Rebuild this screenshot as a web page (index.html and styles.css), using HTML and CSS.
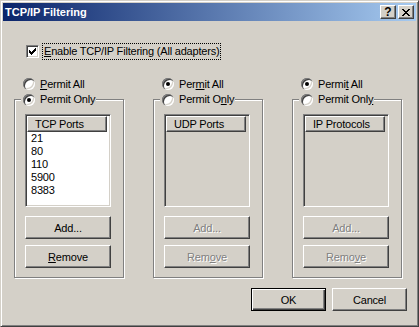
FILE: index.html
```html
<!DOCTYPE html>
<html lang="en">

<head>
  <meta charset="UTF-8" />
  <title>TCP/IP Filtering</title>
  <link rel="stylesheet" href="styles.css">
</head>

<body>

  <div class="window">

    <!-- Caption -->
    <div class="titlebar">
      <span class="title">TCP/IP Filtering</span>
      <div class="caption-buttons">
        <span class="cap-btn help">?</span>
        <span class="cap-btn">
          <svg width="8" height="7" viewBox="0 0 8 7">
            <path d="M0 0h2v1h1v1h2V1h1V0h2v1H7v1H6v1H5v1h1v1h1v1h1v1H6V6H5V5H3v1H2v1H0V6h1V5h1V4h1V3H2V2H1V1H0z" fill="#000" />
          </svg>
        </span>
      </div>
    </div>

    <div class="content">

      <label class="check-row">
        <span class="checkbox">
          <svg width="9" height="9" viewBox="0 0 9 9">
            <path d="M1 3h1v1h1v1h1V4h1V3h1V2h1V1h1v3H7v1H6v1H5v1H4v1H3V7H2V6H1z" fill="#000" />
          </svg>
        </span>
        <span class="focus"><u>E</u>nable TCP/IP Filtering (All adapters)</span>
      </label>

      <div class="columns">

        <!-- TCP -->
        <div class="column">
          <label class="radio-row"><span class="radio"></span><span><u>P</u>ermit All</span></label>
          <fieldset class="group">
            <legend><label class="radio-row"><span class="radio checked"></span><span>Permit Only</span></label></legend>
            <div class="listbox">
              <div class="list-header">TCP Ports</div>
              <ul class="list-items">
                <li>21</li>
                <li>80</li>
                <li>110</li>
                <li>5900</li>
                <li>8383</li>
              </ul>
            </div>
            <button class="btn">Add...</button>
            <button class="btn"><u>R</u>emove</button>
          </fieldset>
        </div>

        <!-- UDP -->
        <div class="column">
          <label class="radio-row"><span class="radio checked"></span><span>Per<u>m</u>it All</span></label>
          <fieldset class="group">
            <legend><label class="radio-row"><span class="radio"></span><span>Permit O<u>n</u>ly</span></label></legend>
            <div class="listbox disabled">
              <div class="list-header">UDP Ports</div>
              <ul class="list-items"></ul>
            </div>
            <button class="btn disabled">Add...</button>
            <button class="btn disabled">Rem<u>o</u>ve</button>
          </fieldset>
        </div>

        <!-- IP -->
        <div class="column">
          <label class="radio-row"><span class="radio checked"></span><span>Permi<u>t</u> All</span></label>
          <fieldset class="group">
            <legend><label class="radio-row"><span class="radio"></span><span>Permit Onl<u>y</u></span></label></legend>
            <div class="listbox disabled">
              <div class="list-header">IP Protocols</div>
              <ul class="list-items"></ul>
            </div>
            <button class="btn disabled">Add...</button>
            <button class="btn disabled">Remo<u>v</u>e</button>
          </fieldset>
        </div>

      </div>

      <div class="dialog-buttons">
        <button class="btn wide default">OK</button>
        <button class="btn wide">Cancel</button>
      </div>

    </div>
  </div>

</body>

</html>
```

FILE: styles.css
```css
body {
  margin: 0;
  padding: 0;
  font-family: 'Liberation Sans', Arial, sans-serif;
  font-size: 11px;
  color: #000;
  background: #d4d0c8;
}

u {
  text-decoration: underline;
  text-underline-offset: 1px;
}

/* Window frame */
.window {
  box-sizing: border-box;
  width: 419px;
  height: 327px;
  padding: 1px;
  background: #d4d0c8;
  border: 1px solid;
  border-color: #d4d0c8 #404040 #404040 #d4d0c8;
  box-shadow: inset 1px 1px 0 #fff, inset -1px -1px 0 #808080;
  display: flex;
  flex-direction: column;
}

.titlebar {
  height: 18px;
  margin: 1px 1px 0 1px;
  background: linear-gradient(to right, #0a246a, #a6caf0);
  display: flex;
  align-items: center;
  justify-content: space-between;
  padding: 0 2px;
}

.title {
  color: #fff;
  font-weight: bold;
  line-height: 18px;
}

.caption-buttons {
  display: flex;
  gap: 2px;
}

.cap-btn {
  box-sizing: border-box;
  width: 16px;
  height: 14px;
  background: #d4d0c8;
  border: 1px solid;
  border-color: #fff #404040 #404040 #fff;
  box-shadow: inset -1px -1px 0 #808080;
  display: flex;
  align-items: center;
  justify-content: center;
}

.cap-btn.help {
  font-weight: bold;
  font-size: 12px;
  line-height: 12px;
}

.content {
  flex: 1;
  padding: 22px 0 0 24px;
  display: flex;
  flex-direction: column;
  letter-spacing: -0.2px;
}

/* Checkbox */
.check-row {
  display: flex;
  align-items: center;
  height: 17px;
}

.checkbox {
  box-sizing: border-box;
  width: 13px;
  height: 13px;
  background: #fff;
  border: 1px solid;
  border-color: #808080 #fff #fff #808080;
  box-shadow: inset 1px 1px 0 #404040, inset -1px -1px 0 #d4d0c8;
  display: flex;
  align-items: center;
  justify-content: center;
}

.focus {
  margin-left: 3px;
  padding: 1px 1px 2px 1px;
  border: 1px dotted #000;
  line-height: 12px;
}

/* Columns */
.columns {
  display: flex;
  gap: 29px;
  margin: 17px 0 0 -12px;
}

.column {
  width: 110px;
  display: flex;
  flex-direction: column;
}

.radio-row {
  display: flex;
  align-items: center;
  gap: 5px;
  height: 14px;
  line-height: 13px;
  padding-left: 9px;
}

.radio {
  position: relative;
  box-sizing: border-box;
  width: 12px;
  height: 12px;
  border-radius: 50%;
  background: #fff;
  box-shadow: inset 1px 1px 0 #808080, inset 2px 2px 0 #404040, inset -1px -1px 0 #fff, inset -2px -2px 0 #d4d0c8;
  flex-shrink: 0;
}

.radio.checked::after {
  content: '';
  position: absolute;
  left: 4px;
  top: 4px;
  width: 4px;
  height: 4px;
  border-radius: 50%;
  background: #000;
}

/* Group box */
.group {
  box-sizing: border-box;
  width: 110px;
  min-width: 0;
  margin: 2px 0 0 0;
  padding: 8px 0 9px 10px;
  border: 1px solid #808080;
  box-shadow: 1px 1px 0 #fff, inset 1px 1px 0 #fff;
}

.group legend {
  margin-left: -4px;
  padding: 0 1px;
  background: #d4d0c8;
}

.group legend .radio-row {
  padding-left: 1px;
  height: 13px;
}

.listbox {
  box-sizing: border-box;
  width: 86px;
  height: 93px;
  padding: 1px;
  background: #fff;
  border: 1px solid;
  border-color: #808080 #fff #fff #808080;
  box-shadow: inset 1px 1px 0 #404040, inset -1px -1px 0 #d4d0c8;
}

.listbox.disabled {
  background: #d4d0c8;
}

.list-header {
  box-sizing: border-box;
  width: 80px;
  height: 16px;
  line-height: 14px;
  padding-left: 7px;
  background: #d4d0c8;
  border: 1px solid;
  border-color: #fff #404040 #404040 #fff;
  box-shadow: inset -1px -1px 0 #808080;
}

.list-items {
  list-style: none;
  margin: 0;
  padding: 0;
}

.list-items li {
  height: 13px;
  line-height: 13px;
  padding-left: 4px;
}

/* Buttons */
.btn {
  box-sizing: border-box;
  width: 86px;
  height: 23px;
  margin-top: 9px;
  padding: 0;
  font-family: inherit;
  font-size: 11px;
  letter-spacing: inherit;
  color: #000;
  background: #d4d0c8;
  border: 1px solid;
  border-color: #fff #404040 #404040 #fff;
  border-radius: 0;
  box-shadow: inset -1px -1px 0 #808080;
  display: block;
}

.btn + .btn {
  margin-top: 6px;
}

.btn.disabled {
  color: #808080;
  text-shadow: 1px 1px 0 #fff;
}

.dialog-buttons {
  display: flex;
  justify-content: flex-end;
  gap: 6px;
  margin: 10px 10px 0 0;
}

.dialog-buttons .btn {
  margin-top: 0;
}

.btn.wide {
  width: 75px;
}

.btn.default {
  border: 1px solid #000;
  box-shadow: inset 1px 1px 0 #fff, inset -1px -1px 0 #404040, inset -2px -2px 0 #808080;
}
```
